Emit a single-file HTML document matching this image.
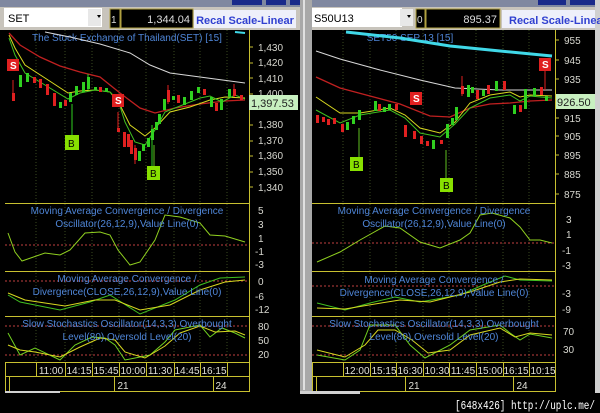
<!DOCTYPE html><html><head><style>
html,body{margin:0;padding:0;background:#000;width:600px;height:413px;overflow:hidden}
svg{display:block;font-family:"Liberation Sans",Arial,sans-serif}
.t{fill:#4f86d8;font-size:10px}
.ax{fill:#d8d8d0;font-size:10px}
.tm{fill:#e0e0d8;font-size:10px}
</style></head><body>
<svg width="600" height="413" viewBox="0 0 600 413">
<rect width="600" height="413" fill="#000"/>
<rect x="0" y="0" width="600" height="7" fill="#8088a0"/>
<rect x="232" y="0" width="30" height="5" fill="#1a2a8a"/><rect x="266" y="0" width="20" height="5" fill="#1a2a8a"/><rect x="290" y="0" width="10" height="5" fill="#1a2a8a"/>
<rect x="538" y="0" width="28" height="5" fill="#1a2a8a"/><rect x="570" y="0" width="25" height="5" fill="#1a2a8a"/>
<rect x="0" y="7" width="300" height="23" fill="#c8c4bc"/>
<rect x="300" y="0" width="12" height="394" fill="#a8a8a8"/><rect x="303" y="0" width="2" height="390" fill="#e0e0e0"/>
<rect x="312" y="7" width="288" height="23" fill="#c8c4bc"/>
<rect x="595" y="0" width="5" height="393" fill="#d0d0d0"/>
<rect x="4" y="8" width="98" height="19" fill="#fff"/><rect x="88" y="9" width="13" height="17" fill="#e8e8e8"/><path d="M97 15 l4 0 -2 3z" fill="#000"/>
<text x="8" y="22" font-size="11" fill="#000">SET</text>
<rect x="110" y="9" width="10" height="19" fill="#000" stroke="#b0a040"/><text x="111" y="23" font-size="10" fill="#ddd">1</text>
<rect x="121" y="9" width="72" height="19" fill="#000" stroke="#b0a040"/><text x="190" y="23" font-size="11" fill="#ddd" text-anchor="end">1,344.04</text>
<rect x="194" y="10" width="102" height="18" fill="#eef0fa"/><text x="245" y="24" font-size="11" font-weight="bold" fill="#3040d0" text-anchor="middle">Recal Scale-Linear</text>
<rect x="312" y="8" width="90" height="19" fill="#fff"/><rect x="400" y="9" width="13" height="17" fill="#e8e8e8"/><path d="M407 15 l4 0 -2 3z" fill="#000"/>
<text x="314" y="22" font-size="11" fill="#000">S50U13</text>
<rect x="416" y="9" width="9" height="19" fill="#000" stroke="#b0a040"/><text x="417" y="23" font-size="10" fill="#ddd">0</text>
<rect x="426" y="9" width="74" height="19" fill="#000" stroke="#b0a040"/><text x="497" y="23" font-size="11" fill="#ddd" text-anchor="end">895.37</text>
<rect x="502" y="10" width="93" height="18" fill="#eef0fa"/><text x="509" y="24" font-size="11" font-weight="bold" fill="#3040d0">Recal Scale-Linea</text>

<g stroke="#c8c030" fill="none" stroke-width="1">
<line x1="5" y1="203.5" x2="249" y2="203.5"/><line x1="5" y1="271.5" x2="249" y2="271.5"/><line x1="5" y1="316.5" x2="249" y2="316.5"/><line x1="5" y1="362.5" x2="249" y2="362.5"/>
<line x1="249.5" y1="30" x2="249.5" y2="362"/>
<rect x="5.5" y="362.5" width="244" height="14"/><rect x="5.5" y="376.5" width="244" height="15"/>
<line x1="36.5" y1="362" x2="36.5" y2="376"/><line x1="65.5" y1="362" x2="65.5" y2="376"/><line x1="92.5" y1="362" x2="92.5" y2="376"/><line x1="119.5" y1="362" x2="119.5" y2="376"/><line x1="146.5" y1="362" x2="146.5" y2="376"/><line x1="174.5" y1="362" x2="174.5" y2="376"/><line x1="200.5" y1="362" x2="200.5" y2="376"/><line x1="227.5" y1="362" x2="227.5" y2="376"/>
<line x1="9.5" y1="376" x2="9.5" y2="391"/><line x1="114.5" y1="376" x2="114.5" y2="391"/><line x1="213.5" y1="376" x2="213.5" y2="391"/>
</g>
<g stroke="#3a4a20" stroke-dasharray="1,2">
<line x1="36" y1="30" x2="36" y2="362"/><line x1="65" y1="30" x2="65" y2="362"/><line x1="92" y1="30" x2="92" y2="362"/><line x1="119" y1="30" x2="119" y2="362"/><line x1="146" y1="30" x2="146" y2="362"/><line x1="174" y1="30" x2="174" y2="362"/><line x1="200" y1="30" x2="200" y2="362"/><line x1="227" y1="30" x2="227" y2="362"/>
</g>
<g stroke="#c8c030"><line x1="249" y1="47" x2="253" y2="47"/><line x1="249" y1="63" x2="253" y2="63"/><line x1="249" y1="78" x2="253" y2="78"/><line x1="249" y1="94" x2="253" y2="94"/><line x1="249" y1="125" x2="253" y2="125"/><line x1="249" y1="141" x2="253" y2="141"/><line x1="249" y1="156" x2="253" y2="156"/><line x1="249" y1="172" x2="253" y2="172"/><line x1="249" y1="187" x2="253" y2="187"/></g>
<text class="t" x="127" y="41" text-anchor="middle">The Stock Exchange of Thailand(SET) [15]</text>
<path d="M235 32 L245 33" stroke="#40d8e8" stroke-width="2"/>
<path d="M45 32 L70 37 L100 44 L130 53 L150 65 L170 73 L200 77 L245 83" stroke="#d8d8d8" fill="none"/>
<path d="M9 33 L20 45 L40 57 L60 66 L80 72 L100 77 L120 93 L140 108 L155 113 L175 108 L200 104 L225 101 L245 100" stroke="#c02020" fill="none" stroke-width="1.3"/>
<path d="M9 35 L15 48 L25 65 L45 78 L68 93 L80 91 L95 90 L110 92 L120 105 L130 125 L145 136 L155 128 L170 112 L190 107 L210 100 L225 97 L245 98" stroke="#d8d820" fill="none"/>
<path d="M9 38 L15 55 L25 73 L45 85 L68 99 L80 93 L95 90 L110 92 L118 100 L125 122 L135 142 L145 145 L155 130 L165 112 L180 106 L200 98 L210 96 L222 102 L235 95 L245 99" stroke="#40c020" fill="none"/>
<g fill="#e02020">
<rect x="12" y="93" width="3" height="8"/><rect x="33" y="77" width="3" height="6"/><rect x="39" y="79" width="3" height="9"/><rect x="46" y="84" width="3" height="11"/><rect x="53" y="93" width="3" height="13"/><rect x="64" y="100" width="3" height="6"/><rect x="99" y="87" width="3" height="5"/>
<rect x="117" y="128" width="3" height="4"/><rect x="123" y="132" width="3" height="15"/><rect x="127" y="134" width="3" height="13"/><rect x="130" y="140" width="3" height="14"/><rect x="134" y="148" width="3" height="12"/><rect x="167" y="90" width="3" height="12"/><rect x="177" y="95" width="3" height="8"/><rect x="203" y="89" width="3" height="6"/><rect x="215" y="103" width="3" height="8"/><rect x="233" y="89" width="3" height="7"/><rect x="240" y="95" width="3" height="5"/>
</g>
<g stroke="#e02020"><line x1="13" y1="80" x2="13" y2="101"/><line x1="118" y1="112" x2="118" y2="132"/><line x1="168" y1="85" x2="168" y2="104"/><line x1="135" y1="145" x2="135" y2="164"/><line x1="234" y1="84" x2="234" y2="97"/></g>
<g fill="#30d020">
<rect x="19" y="75" width="3" height="12"/><rect x="26" y="73" width="3" height="9"/><rect x="59" y="102" width="3" height="6"/><rect x="69" y="93" width="3" height="9"/><rect x="75" y="86" width="3" height="9"/><rect x="82" y="82" width="3" height="10"/><rect x="87" y="77" width="3" height="12"/><rect x="94" y="87" width="3" height="3"/><rect x="105" y="88" width="3" height="4"/>
<rect x="138" y="151" width="3" height="10"/><rect x="142" y="144" width="3" height="7"/><rect x="147" y="138" width="3" height="9"/><rect x="151" y="129" width="3" height="11"/><rect x="155" y="122" width="3" height="8"/><rect x="158" y="114" width="3" height="10"/><rect x="163" y="99" width="3" height="11"/><rect x="172" y="96" width="3" height="4"/><rect x="183" y="97" width="3" height="8"/><rect x="190" y="91" width="3" height="9"/><rect x="197" y="87" width="3" height="6"/><rect x="210" y="97" width="3" height="10"/><rect x="220" y="99" width="3" height="11"/><rect x="228" y="89" width="3" height="8"/>
</g>
<g stroke="#30d020"><line x1="88" y1="74" x2="88" y2="90"/><line x1="152" y1="125" x2="152" y2="166"/><line x1="72" y1="104" x2="72" y2="135"/></g>
<line x1="154" y1="145" x2="154" y2="168" stroke="#60c020"/>
<rect x="7" y="59" width="12" height="12" fill="#e02020"/><text x="10" y="69" font-size="10" font-weight="bold" fill="#fff">S</text>
<rect x="112" y="94" width="12" height="13" fill="#e02020"/><text x="115" y="104" font-size="10" font-weight="bold" fill="#fff">S</text>
<rect x="65" y="135" width="14" height="15" fill="#88e000"/><text x="68" y="147" font-size="10" fill="#000">B</text>
<rect x="147" y="166" width="13" height="14" fill="#88e000"/><text x="150" y="177" font-size="10" fill="#000">B</text>
<g class="ax"><text x="258" y="51">1,430</text><text x="258" y="66">1,420</text><text x="258" y="82">1,410</text><text x="258" y="97">1,400</text><text x="258" y="128">1,380</text><text x="258" y="144">1,370</text><text x="258" y="159">1,360</text><text x="258" y="175">1,350</text><text x="258" y="191">1,340</text></g>
<rect x="249" y="95" width="49" height="15" fill="#c8f0c0"/><text x="251" y="107" font-size="11" fill="#202020">1,397.53</text>
<g stroke="#c04040" stroke-dasharray="2,2"><line x1="5" y1="245" x2="249" y2="245"/><line x1="5" y1="281" x2="249" y2="281"/><line x1="5" y1="326" x2="249" y2="326"/><line x1="5" y1="355" x2="249" y2="355"/></g>
<path d="M8 233 L15 252 L22 261 L45 253 L60 255 L70 250 L85 233 L100 232 L110 235 L118 250 L130 265 L140 262 L155 240 L165 215 L180 217 L200 223 L210 235 L225 236 L245 242" stroke="#90d020" fill="none"/>
<path d="M8 295 L20 302 L60 310 L90 302 L110 295 L140 314 L175 300 L200 285 L220 278 L245 277" stroke="#40c020" fill="none"/>
<path d="M8 293 L25 300 L65 306 L95 300 L115 300 L140 310 L170 305 L200 290 L225 282 L245 280" stroke="#d8d820" fill="none"/>
<path d="M8 333 L20 355 L35 348 L60 360 L75 345 L92 337 L105 338 L115 345 L125 360 L150 355 L165 342 L175 330 L200 325 L210 337 L222 328 L235 333 L245 338" stroke="#70d020" fill="none"/>
<path d="M8 345 L20 350 L35 352 L60 357 L80 347 L100 338 L115 340 L125 352 L145 358 L165 346 L180 333 L200 326 L215 332 L235 331 L245 335" stroke="#d8d820" fill="none"/>
<g class="t" text-anchor="middle"><text x="127" y="214">Moving Average Convergence / Divergence</text><text x="127" y="227">Oscillator(26,12,9),Value Line(0)</text>
<text x="127" y="282">Moving Average Convergence /</text><text x="127" y="295">Divergence(CLOSE,26,12,9),Value Line(0)</text>
<text x="127" y="327">Slow Stochastics Oscillator(14,3,3) Overbought</text><text x="127" y="340">Level(80),Oversold Level(20)</text></g>
<g class="ax"><text x="258" y="214">5</text><text x="258" y="228">3</text><text x="258" y="242">1</text><text x="255" y="255">-1</text><text x="255" y="268">-3</text><text x="258" y="285">0</text><text x="255" y="300">-6</text><text x="255" y="313">-12</text><text x="258" y="330">80</text><text x="258" y="344">50</text><text x="258" y="358">20</text></g>
<g class="tm" text-anchor="middle"><text x="51" y="374">11:00</text><text x="79" y="374">14:15</text><text x="106" y="374">15:45</text><text x="133" y="374">10:00</text><text x="160" y="374">11:30</text><text x="187" y="374">14:45</text><text x="214" y="374">16:15</text><text x="123" y="389">21</text><text x="221" y="389">24</text></g>
<rect x="5" y="391" width="55" height="2" fill="#d0d0d0"/>

<g stroke="#c8c030" fill="none">
<line x1="312" y1="203.5" x2="555" y2="203.5"/><line x1="312" y1="271.5" x2="555" y2="271.5"/><line x1="312" y1="316.5" x2="555" y2="316.5"/><line x1="312" y1="362.5" x2="555" y2="362.5"/>
<line x1="555.5" y1="30" x2="555.5" y2="362"/>
<rect x="312.5" y="362.5" width="243" height="14"/><rect x="312.5" y="376.5" width="243" height="15"/>
<line x1="343.5" y1="362" x2="343.5" y2="376"/><line x1="370.5" y1="362" x2="370.5" y2="376"/><line x1="396.5" y1="362" x2="396.5" y2="376"/><line x1="423.5" y1="362" x2="423.5" y2="376"/><line x1="449.5" y1="362" x2="449.5" y2="376"/><line x1="476.5" y1="362" x2="476.5" y2="376"/><line x1="503.5" y1="362" x2="503.5" y2="376"/><line x1="529.5" y1="362" x2="529.5" y2="376"/>
<line x1="316.5" y1="376" x2="316.5" y2="391"/><line x1="405.5" y1="376" x2="405.5" y2="391"/><line x1="513.5" y1="376" x2="513.5" y2="391"/>
</g>
<g stroke="#3a4a20" stroke-dasharray="1,2">
<line x1="343" y1="30" x2="343" y2="362"/><line x1="370" y1="30" x2="370" y2="362"/><line x1="396" y1="30" x2="396" y2="362"/><line x1="423" y1="30" x2="423" y2="362"/><line x1="449" y1="30" x2="449" y2="362"/><line x1="476" y1="30" x2="476" y2="362"/><line x1="503" y1="30" x2="503" y2="362"/><line x1="529" y1="30" x2="529" y2="362"/>
</g>
<g stroke="#c8c030"><line x1="555" y1="40" x2="559" y2="40"/><line x1="555" y1="60" x2="559" y2="60"/><line x1="555" y1="79" x2="559" y2="79"/><line x1="555" y1="118" x2="559" y2="118"/><line x1="555" y1="136" x2="559" y2="136"/><line x1="555" y1="155" x2="559" y2="155"/><line x1="555" y1="174" x2="559" y2="174"/><line x1="555" y1="194" x2="559" y2="194"/></g>
<text class="t" x="410" y="41" text-anchor="middle">SET50 SEP 13   [15]</text>
<path d="M346 32 L400 38 L450 46 L500 51 L552 56" stroke="#40d8e8" stroke-width="3" fill="none"/>
<path d="M316 51 L340 59 L380 70 L420 80 L455 88 L500 90 L552 90" stroke="#d8d8d8" fill="none"/>
<path d="M316 77 L340 88 L370 96 L400 104 L430 116 L450 117 L470 108 L490 104 L510 103 L530 101 L552 100" stroke="#c02020" fill="none" stroke-width="1.3"/>
<path d="M316 97 L340 113 L360 113 L390 108 L405 115 L420 128 L440 133 L455 122 L470 103 L490 95 L510 92 L520 97 L530 95 L552 96" stroke="#d8d820" fill="none"/>
<path d="M316 110 L340 123 L360 115 L390 110 L405 118 L420 133 L440 137 L455 124 L470 108 L490 98 L510 95 L520 101 L530 96 L552 98" stroke="#40c020" fill="none"/>
<g fill="#e02020"><rect x="316" y="115" width="3" height="8"/><rect x="322" y="117" width="3" height="5"/><rect x="327" y="119" width="3" height="6"/><rect x="333" y="118" width="3" height="6"/><rect x="341" y="124" width="3" height="8"/><rect x="378" y="104" width="3" height="7"/><rect x="395" y="104" width="3" height="6"/><rect x="404" y="125" width="3" height="12"/><rect x="413" y="131" width="3" height="8"/><rect x="420" y="136" width="3" height="8"/><rect x="426" y="141" width="3" height="5"/><rect x="440" y="140" width="3" height="4"/><rect x="461" y="86" width="3" height="8"/><rect x="476" y="90" width="3" height="9"/><rect x="487" y="85" width="3" height="9"/><rect x="503" y="81" width="3" height="9"/><rect x="519" y="105" width="3" height="7"/><rect x="540" y="87" width="3" height="8"/></g>
<g stroke="#e02020"><line x1="462" y1="76" x2="462" y2="96"/><line x1="545" y1="70" x2="545" y2="90"/></g>
<g fill="#30d020"><rect x="346" y="122" width="3" height="8"/><rect x="352" y="116" width="3" height="8"/><rect x="358" y="110" width="3" height="10"/><rect x="374" y="101" width="3" height="10"/><rect x="383" y="107" width="3" height="5"/><rect x="388" y="104" width="3" height="6"/><rect x="432" y="140" width="3" height="9"/><rect x="446" y="124" width="3" height="14"/><rect x="451" y="118" width="3" height="7"/><rect x="455" y="107" width="3" height="13"/><rect x="467" y="85" width="3" height="12"/><rect x="471" y="87" width="3" height="6"/><rect x="482" y="90" width="3" height="6"/><rect x="495" y="81" width="3" height="10"/><rect x="513" y="105" width="3" height="9"/><rect x="524" y="89" width="3" height="20"/><rect x="533" y="88" width="3" height="8"/><rect x="545" y="96" width="3" height="5"/></g>
<line x1="359" y1="128" x2="359" y2="157" stroke="#60c020"/><line x1="446" y1="150" x2="446" y2="178" stroke="#60c020"/>
<rect x="410" y="92" width="12" height="13" fill="#e02020"/><text x="413" y="102" font-size="10" font-weight="bold" fill="#fff">S</text>
<rect x="539" y="58" width="12" height="13" fill="#e02020"/><text x="542" y="68" font-size="10" font-weight="bold" fill="#fff">S</text>
<rect x="350" y="157" width="13" height="14" fill="#88e000"/><text x="353" y="168" font-size="10" fill="#000">B</text>
<rect x="440" y="178" width="13" height="14" fill="#88e000"/><text x="443" y="189" font-size="10" fill="#000">B</text>
<g class="ax"><text x="564" y="44">955</text><text x="564" y="64">945</text><text x="564" y="83">935</text><text x="564" y="122">915</text><text x="564" y="140">905</text><text x="564" y="159">895</text><text x="564" y="178">885</text><text x="564" y="198">875</text></g>
<rect x="556" y="94" width="39" height="15" fill="#c8f0c0"/><text x="557" y="106" font-size="11" fill="#202020">926.50</text>
<g stroke="#c04040" stroke-dasharray="2,2"><line x1="312" y1="243" x2="555" y2="243"/><line x1="312" y1="286" x2="555" y2="286"/><line x1="312" y1="326" x2="555" y2="326"/><line x1="312" y1="355" x2="555" y2="355"/></g>
<path d="M317 262 L340 252 L360 240 L385 226 L400 228 L420 242 L440 248 L460 240 L470 233 L480 215 L492 213 L510 218 L520 227 L530 240 L540 240 L552 243" stroke="#90d020" fill="none"/>
<path d="M317 303 L345 310 L370 303 L395 297 L420 302 L460 295 L490 282 L505 276 L520 280 L552 281" stroke="#40c020" fill="none"/>
<path d="M317 308 L345 309 L375 304 L400 300 L430 302 L470 292 L500 282 L520 279 L552 280" stroke="#d8d820" fill="none"/>
<path d="M317 355 L345 360 L360 350 L370 325 L395 325 L410 345 L425 358 L450 345 L470 330 L500 325 L510 333 L520 340 L530 334 L552 338" stroke="#70d020" fill="none"/>
<path d="M317 350 L345 357 L365 345 L378 330 L395 330 L412 340 L428 353 L450 350 L470 335 L500 328 L515 337 L530 333 L552 335" stroke="#d8d820" fill="none"/>
<g class="t" text-anchor="middle"><text x="434" y="214">Moving Average Convergence / Divergence</text><text x="434" y="227">Oscillator(26,12,9),Value Line(0)</text>
<text x="434" y="283">Moving Average Convergence /</text><text x="434" y="296">Divergence(CLOSE,26,12,9),Value Line(0)</text>
<text x="434" y="327">Slow Stochastics Oscillator(14,3,3) Overbought</text><text x="434" y="340">Level(80),Oversold Level(20)</text></g>
<g class="ax"><text x="566" y="223">3</text><text x="566" y="238">1</text><text x="562" y="254">-1</text><text x="562" y="269">-3</text><text x="562" y="297">-3</text><text x="562" y="313">-9</text><text x="563" y="335">70</text><text x="563" y="353">30</text></g>
<g class="tm" text-anchor="middle"><text x="357" y="374">12:00</text><text x="384" y="374">15:15</text><text x="410" y="374">16:30</text><text x="437" y="374">10:30</text><text x="463" y="374">11:45</text><text x="490" y="374">15:00</text><text x="516" y="374">16:15</text><text x="543" y="374">10:15</text><text x="414" y="389">21</text><text x="522" y="389">24</text></g>
<rect x="300" y="391" width="60" height="3" fill="#d0d0d0"/>
<text x="455" y="409" font-size="12" fill="#fff" font-family="Liberation Mono,monospace" textLength="140" lengthAdjust="spacingAndGlyphs">[648x426] http://uplc.me/</text>
</svg></body></html>
